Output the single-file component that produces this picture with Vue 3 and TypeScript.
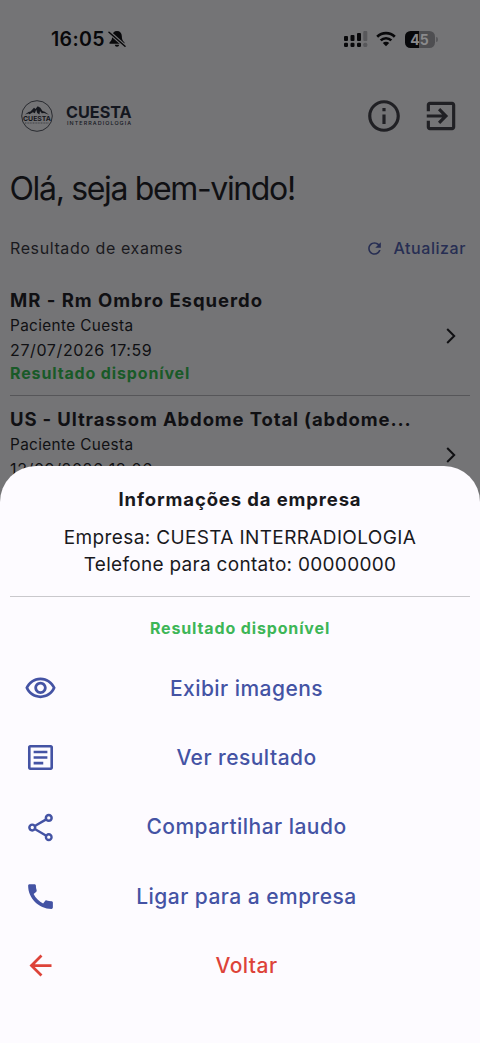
<script setup lang="ts">
interface Exam {
  title: string
  patient: string
  date: string
  status?: string
}

interface Action {
  label: string
  icon: string
  danger?: boolean
}

const exams: Exam[] = [
  { title: 'MR - Rm Ombro Esquerdo', patient: 'Paciente Cuesta', date: '27/07/2026 17:59', status: 'Resultado disponível' },
  { title: 'US - Ultrassom Abdome Total (abdome...', patient: 'Paciente Cuesta', date: '12/09/2026 18:06' },
]

const actions: Action[] = [
  {
    label: 'Exibir imagens',
    icon: 'M12 6c3.79 0 7.17 2.13 8.82 5.5C19.17 14.87 15.79 17 12 17s-7.17-2.13-8.82-5.5C4.83 8.13 8.21 6 12 6m0-2C7 4 2.73 7.11 1 11.5 2.73 15.89 7 19 12 19s9.27-3.11 11-7.5C21.27 7.11 17 4 12 4zm0 5c1.38 0 2.5 1.12 2.5 2.5S13.38 14 12 14s-2.5-1.12-2.5-2.5S10.62 9 12 9m0-2c-2.48 0-4.5 2.02-4.5 4.5S9.52 16 12 16s4.5-2.02 4.5-4.5S14.48 7 12 7z',
  },
  {
    label: 'Ver resultado',
    icon: 'M19.2 4.8v14.4H4.8V4.8h14.4M19.5 2.9h-15c-.9 0-1.6.7-1.6 1.6v15c0 .9.7 1.6 1.6 1.6h15c.9 0 1.6-.7 1.6-1.6v-15c0-.9-.7-1.6-1.6-1.6zM14 17H7v-1.900h7V17zm3-4.050H7v-1.900h10v1.900zM17 8.900H7V7h10v1.900z',
  },
  {
    label: 'Compartilhar laudo',
    icon: 'M18 16.08c-.76 0-1.44.3-1.96.77L8.91 12.7c.05-.23.09-.46.09-.7s-.04-.47-.09-.7l7.05-4.11c.54.5 1.25.81 2.04.81 1.66 0 3-1.34 3-3s-1.34-3-3-3-3 1.34-3 3c0 .24.04.47.09.7L8.04 9.81C7.5 9.31 6.79 9 6 9c-1.66 0-3 1.34-3 3s1.34 3 3 3c.79 0 1.5-.31 2.04-.81l7.12 4.16c-.05.21-.08.43-.08.65 0 1.61 1.31 2.92 2.92 2.92s2.92-1.31 2.92-2.92-1.31-2.92-2.92-2.92zM18 3.8a1.2 1.2 0 1 1 0 2.4 1.2 1.2 0 0 1 0-2.4zM6 13.2a1.2 1.2 0 1 1 0-2.4 1.2 1.2 0 0 1 0 2.4zm12 7a1.2 1.2 0 1 1 0-2.4 1.2 1.2 0 0 1 0 2.4z',
  },
  {
    label: 'Ligar para a empresa',
    icon: 'M20.01 15.38c-1.23 0-2.42-.2-3.53-.56-.35-.12-.74-.03-1.01.24l-1.57 1.97c-2.83-1.35-5.48-3.9-6.89-6.83l1.95-1.66c.27-.28.35-.67.24-1.02-.37-1.11-.56-2.3-.56-3.53 0-.54-.45-.99-.99-.99H4.19C3.65 3 3 3.24 3 3.99 3 13.28 10.73 21 20.01 21c.71 0 .99-.63.99-1.18v-3.45c0-.54-.45-.99-.99-.99z',
  },
  {
    label: 'Voltar',
    danger: true,
    icon: 'M20 11H7.83l5.59-5.59L12 4l-8 8 8 8 1.41-1.41L7.83 13H20v-2z',
  },
]
</script>

<template>
  <main class="screen">
    <div class="status">
      <div class="clock">
        <span>16:05</span>
        <svg width="18" height="18" viewBox="0 0 18 18">
          <path d="M9 1C6 1 4.3 3.1 4.2 6c-.1 3.4-.7 4.5-2.3 6-.9.9-.5 1.800.4 1.800h13.400c.9 0 1.300-.9.4-1.800-1.600-1.500-2.200-2.600-2.300-6C13.700 3.100 12 1 9 1zM6.800 14.800c.2 1.300 1 2 2.200 2s2-.7 2.200-2z" />
          <path d="M1 2.200 17 16.200" stroke="#747476" stroke-width="3.600" />
          <path d="M1 2.200 17 16.200" stroke="#08080a" stroke-width="1.500" stroke-linecap="round" />
        </svg>
      </div>
      <div class="signals">
        <svg class="cell" width="24" height="18" viewBox="0 0 24 18">
          <rect x="0" y="6" width="4" height="5" rx="1" /><rect x="6.500" y="5" width="4" height="6" rx="1" /><rect x="13" y="3" width="4" height="8" rx="1" /><rect class="faint" x="19.300" y="1" width="4" height="10" rx="1" />
          <rect x="0" y="12.700" width="4" height="4.300" rx="1.200" /><rect x="6.500" y="12.700" width="4" height="4.300" rx="1.200" /><rect x="13" y="12.700" width="4" height="4.300" rx="1.200" /><rect class="faint" x="19.300" y="12.700" width="4" height="4.300" rx="1.500" />
        </svg>
        <svg class="wifi" width="20" height="16" viewBox="0 0 20 16">
          <g fill="none" stroke="#08080a" stroke-width="2.700">
            <path d="M1.200 5.800a12.600 12.600 0 0 1 17.600 0" />
            <path d="M4.700 9.400a7.600 7.600 0 0 1 10.600 0" />
          </g>
          <path d="M10 15.300 6.800 12a4.600 4.600 0 0 1 6.400 0z" />
        </svg>
        <div class="battery"><span>45</span></div>
        <i class="nub"></i>
      </div>
    </div>

    <header class="header">
      <div class="brand">
        <svg width="32" height="32" viewBox="0 0 32 32">
          <circle cx="16" cy="16" r="15.300" fill="none" stroke="#202228" stroke-width=".9" />
          <path d="M4 14.500 7.500 12l2-.5L13 7.800l1.500 1.200L16.700 6.300l2.600 1.500 2.200 3.200 2.200.8 4.300 3-4.800-1.800-2.400.3-1.800-2.300-.6 3.400-2.200-1.500-1-3.300-1.300 3.600-2.100-1-3.200 2-1.200-.8z" fill="#15171d" />
          <text x="16" y="21" text-anchor="middle" textLength="28" lengthAdjust="spacingAndGlyphs">CUESTA</text>
          <path d="M4 23h24" stroke="#303238" stroke-width="1" stroke-dasharray="1 .6" opacity=".75" />
        </svg>
        <div class="wordmark"><strong>CUESTA</strong><small>INTERRADIOLOGIA</small></div>
      </div>
      <div class="tools">
        <svg width="38" height="38" viewBox="0 0 24 24"><path d="M11 7h2v2h-2V7zm0 4h2v6h-2v-6zm1-9C6.480 2 2 6.480 2 12s4.480 10 10 10 10-4.480 10-10S17.520 2 12 2zm0 18c-4.410 0-8-3.590-8-8s3.590-8 8-8 8 3.590 8 8-3.590 8-8 8z" /></svg>
        <svg width="38" height="38" viewBox="0 0 24 24"><path d="M10.090 15.590 11.500 17l5-5-5-5-1.410 1.410L12.670 11H3v2h9.670l-2.580 2.590zM19 3H5c-1.110 0-2 .9-2 2v4h2V5h14v14H5v-4H3v4c0 1.100.89 2 2 2h14c1.100 0 2-.9 2-2V5c0-1.100-.9-2-2-2z" /></svg>
      </div>
    </header>

    <h1>Olá, seja bem-vindo!</h1>

    <div class="section">
      <span>Resultado de exames</span>
      <button class="refresh">
        <svg width="19" height="19" viewBox="0 0 24 24"><path d="M17.650 6.350C16.200 4.900 14.210 4 12 4c-4.420 0-7.990 3.580-7.990 8s3.570 8 7.990 8c3.730 0 6.840-2.550 7.730-6h-2.080c-.82 2.330-3.040 4-5.650 4-3.310 0-6-2.690-6-6s2.690-6 6-6c1.660 0 3.140.69 4.220 1.780L13 11h7V4l-2.350 2.350z" /></svg>
        <span>Atualizar</span>
      </button>
    </div>

    <section class="exams">
      <article v-for="exam in exams" :key="exam.title" class="exam">
        <div class="details">
          <h2>{{ exam.title }}</h2>
          <p class="patient">{{ exam.patient }}</p>
          <p class="date">{{ exam.date }}</p>
          <p v-if="exam.status" class="available">{{ exam.status }}</p>
        </div>
        <svg width="10" height="16" viewBox="0 0 10 16"><path d="m1.200 1 7 7-7 7" fill="none" stroke="#101013" stroke-width="2" /></svg>
      </article>
    </section>

    <section class="sheet">
      <div class="company">
        <h3>Informações da empresa</h3>
        <p class="name">Empresa: CUESTA INTERRADIOLOGIA</p>
        <p class="phone">Telefone para contato: 00000000</p>
      </div>
      <p class="result">Resultado disponível</p>
      <button v-for="action in actions" :key="action.label" class="action" :class="{ danger: action.danger }">
        <svg width="33" height="33" viewBox="0 0 24 24"><path :d="action.icon" fill-rule="evenodd" /></svg>
        <span>{{ action.label }}</span>
      </button>
    </section>
  </main>
</template>

<style>
body {
  margin: 0;
  background: #747476;
}
</style>

<style scoped>
.screen {
  position: relative;
  box-sizing: border-box;
  width: 480px;
  height: 1043px;
  overflow: hidden;
  background: #747476;
  color: #101013;
  font-family: Inter, Roboto, sans-serif;
}
h1, h2, h3, p { margin: 0; }
button {
  border: 0;
  padding: 0;
  background: none;
  font-family: inherit;
}
.status {
  display: flex;
  align-items: center;
  justify-content: space-between;
  height: 78px;
  padding: 0 42.5px 0 51px;
  color: #08080a;
  fill: #08080a;
}
.clock {
  display: flex;
  align-items: center;
  gap: 3px;
  font-size: 19.5px;
  font-weight: 600;
  letter-spacing: 0.35px;
}
.signals { display: flex; align-items: center; }
.faint { fill: #58585b; }
.wifi { margin: 0 9px 0 8px; }
.battery {
  width: 30px;
  height: 17px;
  border-radius: 5.5px;
  background: linear-gradient(90deg, #08080a 46%, #4e4e51 46%);
  color: #8a8a8c;
  font-size: 14px;
  font-weight: 700;
  line-height: 17px;
  text-align: center;
}
.nub {
  width: 2px;
  height: 5px;
  margin-left: 1px;
  border-radius: 0 2px 2px 0;
  background: #58585b;
}
.header {
  display: flex;
  align-items: center;
  justify-content: space-between;
  height: 75px;
  padding: 0 20px 0 21px;
}
.brand { display: flex; align-items: center; gap: 13px; }
.brand text {
  font-size: 6.8px;
  font-weight: 700;
  fill: #14161c;
}
.wordmark {
  display: flex;
  flex-direction: column;
  margin-top: -2px;
  color: #14171f;
}
.wordmark strong {
  font-size: 16.2px;
  font-weight: 750;
  line-height: 16px;
  letter-spacing: 0;
}
.wordmark small {
  margin-left: 1px;
  font-size: 5.4px;
  font-weight: 500;
  line-height: 6px;
  letter-spacing: 1.08px;
}
.tools { display: flex; gap: 19px; fill: #202024; }
h1 {
  padding-left: 9.5px;
  font-size: 32px;
  font-weight: 400;
  line-height: 72.5px;
  height: 72px;
  letter-spacing: -1.35px;
}
.section {
  display: flex;
  align-items: center;
  justify-content: space-between;
  height: 47px;
  padding: 0 14px 0 10px;
  color: #1a1a1e;
  font-size: 16px;
  letter-spacing: 0.6px;
}
.section > span, .refresh span { margin-top: -1px; }
.refresh {
  display: flex;
  align-items: center;
  gap: 10px;
  color: #272e53;
  fill: #272e53;
  font-size: 16px;
  font-weight: 500;
  letter-spacing: 0.56px;
}
.refresh svg { margin-top: -1px; }
.exams { padding: 4px 10px 0; }
.exam {
  display: flex;
  align-items: center;
  justify-content: space-between;
  box-sizing: border-box;
  height: 119.5px;
  padding: 0 14px 0 0;
  border-bottom: 1px solid #565659;
}
.exam > svg { margin-top: 1px; }
.details { height: 99px; white-space: nowrap; }
h2 {
  font-size: 18.5px;
  font-weight: 700;
  line-height: 28px;
  letter-spacing: 0.97px;
}
.exam:nth-child(2) h2 { letter-spacing: 0.86px; }
.patient {
  font-size: 15.3px;
  line-height: 24px;
  letter-spacing: 0.38px;
}
.date {
  font-size: 16px;
  line-height: 24px;
  letter-spacing: 0.62px;
}
.available {
  color: #195a28;
  font-size: 16px;
  font-weight: 700;
  line-height: 23px;
  letter-spacing: 0.86px;
}
.sheet {
  position: absolute;
  inset: 466.4px 0 0;
  box-sizing: border-box;
  padding: 19.6px 10px 0;
  border-radius: 36px 36px 0 0;
  background: #fdfbff;
  color: #19191d;
  text-align: center;
}
.company {
  height: 110px;
  border-bottom: 1px solid #c9c8cc;
}
h3 {
  font-size: 18.5px;
  font-weight: 700;
  line-height: 27px;
  letter-spacing: 0.87px;
}
.name {
  padding-top: 11px;
  font-size: 19px;
  line-height: 27px;
  letter-spacing: 0.37px;
}
.phone {
  font-size: 19px;
  line-height: 27px;
  letter-spacing: 0.3px;
}
.result {
  height: 57px;
  padding-top: 20px;
  box-sizing: border-box;
  color: #3db657;
  font-size: 16px;
  font-weight: 700;
  line-height: 23px;
  letter-spacing: 0.86px;
}
.action {
  display: grid;
  grid-template-columns: 33px 1fr;
  align-items: center;
  width: 100%;
  height: 69.25px;
  padding: 0 4px 0 14px;
  color: #4453a4;
  fill: #4453a4;
  font-size: 21px;
  font-weight: 450;
  letter-spacing: 0.46px;
}
.action span {
  margin-right: 30px;
  margin-bottom: 0.5px;
}
.danger { color: #dd4339; fill: #dd4339; }
</style>
